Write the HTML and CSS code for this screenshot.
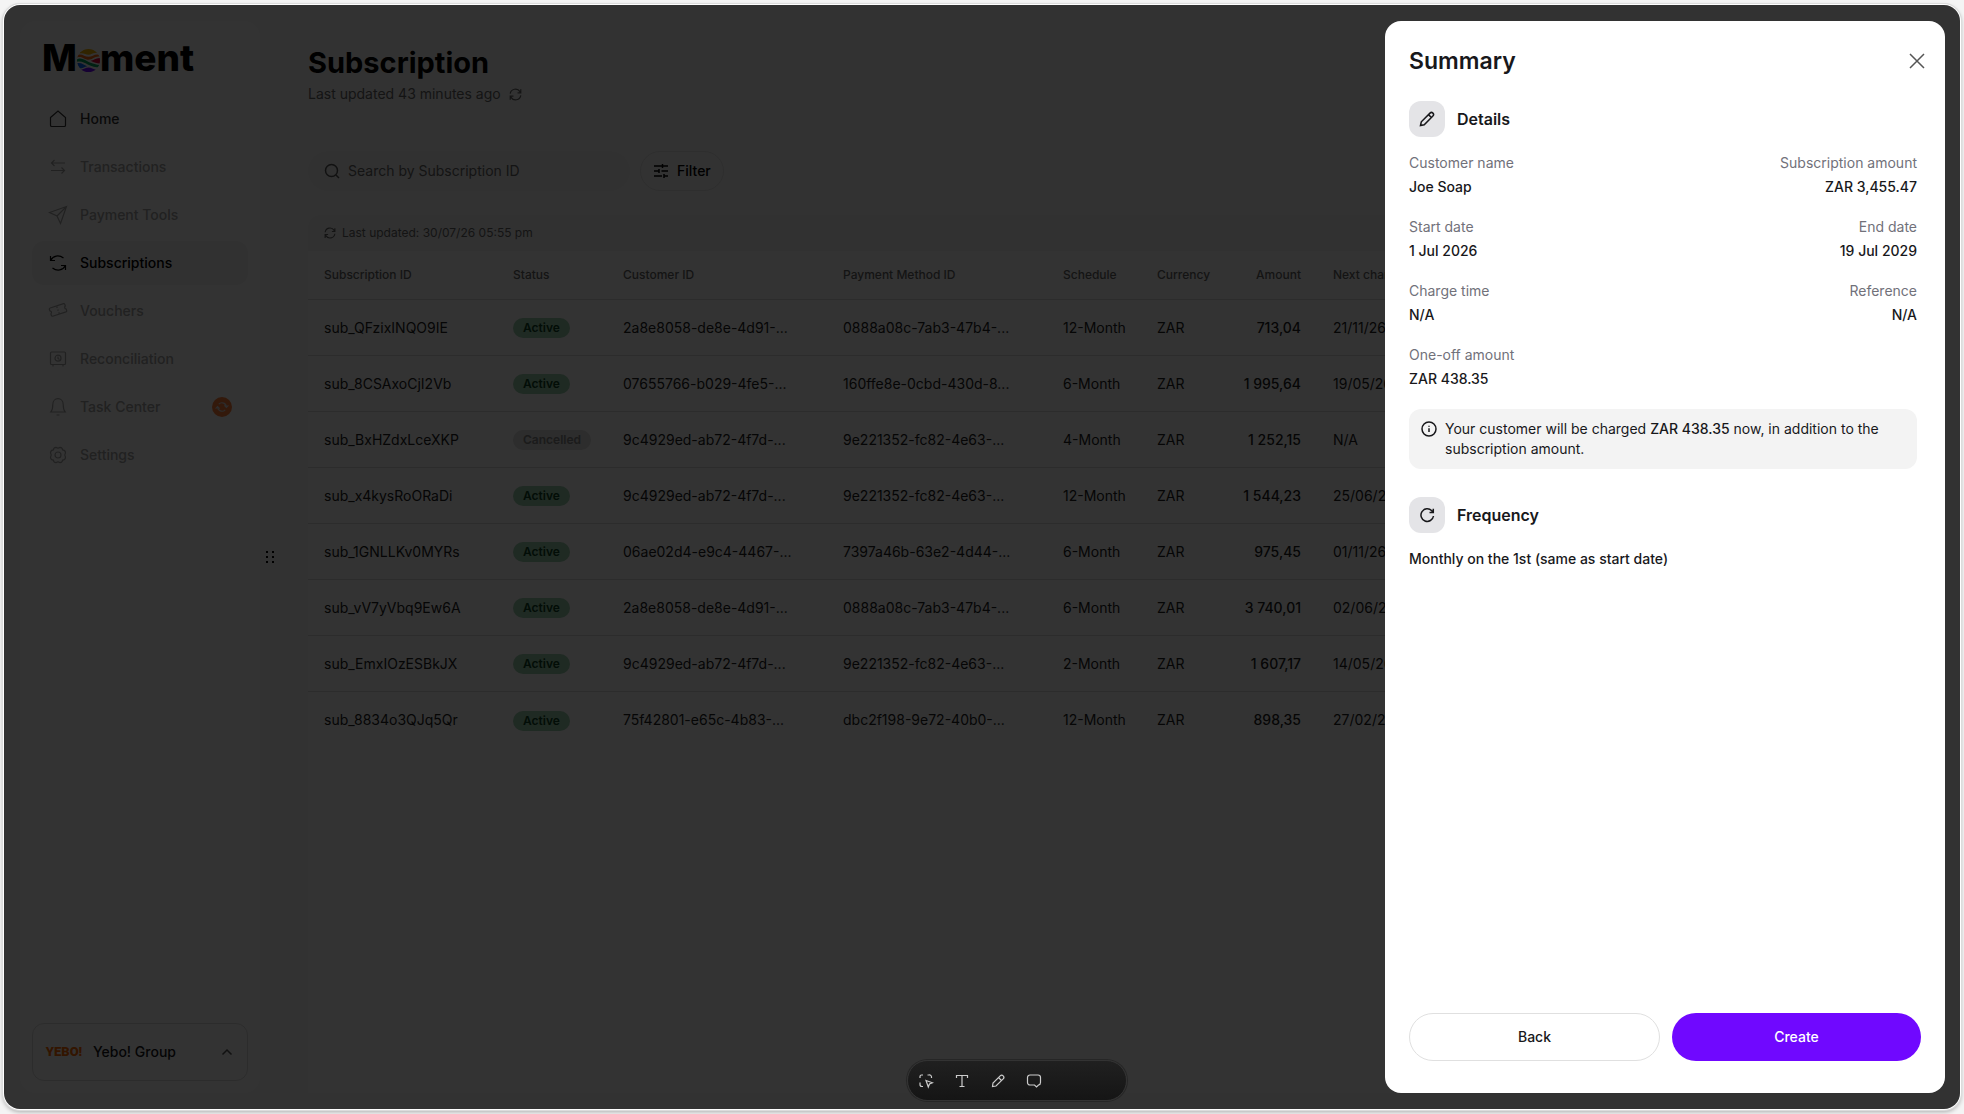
FILE: index.html
```html
<!DOCTYPE html>
<html lang="en">
    <head>
        <meta charset="utf-8">
        <meta name="viewport" content="width=device-width, initial-scale=1">
        <title>Moment - Subscription</title>
        <link rel="stylesheet" href="styles.css">
    </head>
    <body>
        <div class="frame">
            <div class="app">
                <aside class="sidebar">
                    <a href="#" class="logo" aria-label="Moment">
                        <span>M</span>
                        <svg width="23" height="23" viewBox="0 0 68 68">
                            <defs><clipPath id="orb"><circle cx="34" cy="34" r="34"/></clipPath></defs>
                            <g clip-path="url(#orb)">
                                <path d="M8 10Q20 -2 34 -2T60 10L54 12C46 12 42 17 34 17S20 11 8 13Z" fill="#f5b301"/>
                                <path d="M0 18C14 12 22 23 34 23S54 12 68 18V23C54 20 46 32 34 32S16 20 0 25Z" fill="#ff6a13"/>
                                <path d="M40 35C50 34 56 26 68 27V43C58 43 52 40 40 35Z" fill="#e4003a"/>
                                <path d="M0 30C14 24 24 34 36 39S56 46 68 47V55C54 54 44 52 32 46S14 35 0 38Z" fill="#00a35b"/>
                                <path d="M0 42C14 40 20 47 30 51C24 52 18 58 6 58Z" fill="#0a6bff"/>
                                <path d="M10 62C20 60 26 55 34 55S48 60 58 62L50 70H18Z" fill="#7008ff"/>
                            </g>
                        </svg>
                        <span>ment</span>
                    </a>
                    <nav class="menu">
                        <a href="#" class="home">
                            <svg class="icon" viewBox="0 0 20 20"><path d="M2.500 8.500L10 2L17.500 8.500V16.200a1.300 1.300 0 0 1-1.300 1.300H3.800a1.300 1.300 0 0 1-1.300-1.300Z"/></svg>
                            <span>Home</span>
                        </a>
                        <a href="#">
                            <svg class="icon" viewBox="0 0 20 20"><path d="M17 6H3.500M6.500 3L3.500 6L6.500 9M3 13.500H16.500M13.500 10.500L16.500 13.500L13.500 16.500"/></svg>
                            <span>Transactions</span>
                        </a>
                        <a href="#">
                            <svg class="icon" viewBox="0 0 20 20"><path d="M18.500 1.500L1.500 7.500L9 11L12.500 18.500ZM18.500 1.500L9 11"/></svg>
                            <span>Payment Tools</span>
                        </a>
                        <a href="#" class="active">
                            <svg class="icon" viewBox="0 0 20 20"><path d="M2.500 3V7.500H7M2.800 7.300C5 2.500 11 1.500 15.500 5M17.500 17V12.500H13M17.200 12.700C15 17.500 9 18.500 4.500 15"/></svg>
                            <span>Subscriptions</span>
                        </a>
                        <a href="#">
                            <svg class="icon" viewBox="0 0 20 20"><path d="M1.300 8.300Q1.200 7.300 2.200 7L15.500 2.700Q16.500 2.500 16.800 3.400L17.300 5A1.700 1.700 0 0 0 18.200 8L18.700 9.600Q18.900 10.500 18 10.900L4.700 15.200Q3.700 15.400 3.400 14.500L2.900 12.900A1.700 1.700 0 0 0 1.900 9.900Z"/><path d="M8.700 5.500L9.200 7M9.800 8.500L10.200 9.700M10.800 11.200L11.300 12.700"/></svg>
                            <span>Vouchers</span>
                        </a>
                        <a href="#">
                            <svg class="icon" viewBox="0 0 20 20"><rect x="2.500" y="3" width="15" height="12.500" rx="1"/><circle cx="10" cy="9.200" r="3"/><path d="M10 7.500V9.500L11.500 10.500M5 15.500V17.500M15 15.500V17.500"/></svg>
                            <span>Reconciliation</span>
                        </a>
                        <a href="#">
                            <svg class="icon" viewBox="0 0 20 20"><path d="M2.800 15C4.500 13 4.800 11 4.800 7.500C4.800 4 7 1.700 10 1.700S15.200 4 15.200 7.500C15.200 11 15.500 13 17.200 15ZM8.500 18H11.500"/></svg>
                            <span>Task Center</span>
                            <span class="sync">
                                <svg viewBox="0 0 20 20"><path d="M6 6.500A5.500 5.500 0 0 1 15.500 10.500M14 13.500A5.500 5.500 0 0 1 4.500 9.500M2 12L4.500 9.500L7 12M13 8L15.500 10.500L18 8"/></svg>
                            </span>
                        </a>
                        <a href="#">
                            <svg class="icon" viewBox="0 0 20 20"><path d="M8 2.300Q10 4 12 2.300Q14.500 2.500 14.600 4.900Q17.300 5.100 17.500 7.800Q16 10 17.500 12.200Q17.300 14.900 14.600 15.100Q14.500 17.500 12 17.700Q10 16 8 17.700Q5.500 17.500 5.400 15.100Q2.700 14.900 2.500 12.200Q4 10 2.500 7.800Q2.700 5.100 5.400 4.900Q5.500 2.500 8 2.300Z"/><circle cx="10" cy="10" r="3"/></svg>
                            <span>Settings</span>
                        </a>
                    </nav>
                    <button type="button" class="account">
                        <span class="yebo">YEBO!</span>
                        <span class="name">Yebo! Group</span>
                        <svg class="chevron" viewBox="0 0 12 12"><path d="M1.500 8.500L6 4L10.500 8.500"/></svg>
                    </button>
                </aside>

                <div class="handle">
                    <svg width="10" height="12" viewBox="0 0 10 12"><path d="M1 0h2v2h-2zM7 0h2v2h-2zM1 5h2v2h-2zM7 5h2v2h-2zM1 10h2v2h-2zM7 10h2v2h-2z"/></svg>
                </div>

                <main class="main">
                    <h1>Subscription</h1>
                    <div class="updated">
                        Last updated 43 minutes ago
                        <svg class="refresh" viewBox="0 0 16 16"><path d="M1.500 7A6.500 6.500 0 0 1 13.500 4.500L14.500 6M14.500 1.500V6H10.500M14.500 9A6.500 6.500 0 0 1 2.500 11.500L1.500 10M1.500 14.500V10H5.500"/></svg>
                    </div>
                    <div class="tools">
                        <div class="search">
                            <svg viewBox="0 0 16 16"><circle cx="7.500" cy="7.500" r="6"/><path d="M12 12L15 15"/></svg>
                            <input type="text" id="search" placeholder="Search by Subscription ID" aria-label="Search by Subscription ID">
                        </div>
                        <button type="button" class="filter">
                            <svg viewBox="0 0 16 16"><path d="M1 3H9.500M9.500 1V5M9.500 3H15M1 8H6M6 6V10M8.500 8H15M1 13H9M11 11V15M11 13H15"/></svg>
                            Filter
                        </button>
                    </div>
                    <div class="list">
                        <div class="strip">
                            <svg class="refresh" viewBox="0 0 16 16"><path d="M1.500 7A6.500 6.500 0 0 1 13.500 4.500L14.500 6M14.500 1.500V6H10.500M14.500 9A6.500 6.500 0 0 1 2.500 11.500L1.500 10M1.500 14.500V10H5.500"/></svg>
                            Last updated: 30/07/26 05:55 pm
                        </div>
                        <table>
                            <colgroup>
                                <col class="c-id"><col class="c-status"><col class="c-uuid"><col class="c-uuid">
                                <col class="c-schedule"><col class="c-currency"><col class="c-amount"><col>
                            </colgroup>
                            <thead>
                                <tr><th>Subscription ID</th><th>Status</th><th>Customer ID</th><th>Payment Method ID</th><th>Schedule</th><th>Currency</th><th class="amount">Amount</th><th>Next charge date</th></tr>
                            </thead>
                            <tbody>
                                <tr><td>sub_QFzixINQO9IE</td><td><span class="badge">Active</span></td><td>2a8e8058-de8e-4d91-...</td><td>0888a08c-7ab3-47b4-...</td><td>12-Month</td><td>ZAR</td><td class="amount">713,04</td><td>21/11/26</td></tr>
                                <tr><td>sub_8CSAxoCjI2Vb</td><td><span class="badge">Active</span></td><td>07655766-b029-4fe5-...</td><td>160ffe8e-0cbd-430d-8...</td><td>6-Month</td><td>ZAR</td><td class="amount">1 995,64</td><td>19/05/26</td></tr>
                                <tr><td>sub_BxHZdxLceXKP</td><td><span class="badge cancelled">Cancelled</span></td><td>9c4929ed-ab72-4f7d-...</td><td>9e221352-fc82-4e63-...</td><td>4-Month</td><td>ZAR</td><td class="amount">1 252,15</td><td>N/A</td></tr>
                                <tr><td>sub_x4kysRoORaDi</td><td><span class="badge">Active</span></td><td>9c4929ed-ab72-4f7d-...</td><td>9e221352-fc82-4e63-...</td><td>12-Month</td><td>ZAR</td><td class="amount">1 544,23</td><td>25/06/26</td></tr>
                                <tr><td>sub_1GNLLKv0MYRs</td><td><span class="badge">Active</span></td><td>06ae02d4-e9c4-4467-...</td><td>7397a46b-63e2-4d44-...</td><td>6-Month</td><td>ZAR</td><td class="amount">975,45</td><td>01/11/26</td></tr>
                                <tr><td>sub_vV7yVbq9Ew6A</td><td><span class="badge">Active</span></td><td>2a8e8058-de8e-4d91-...</td><td>0888a08c-7ab3-47b4-...</td><td>6-Month</td><td>ZAR</td><td class="amount">3 740,01</td><td>02/06/26</td></tr>
                                <tr><td>sub_EmxIOzESBkJX</td><td><span class="badge">Active</span></td><td>9c4929ed-ab72-4f7d-...</td><td>9e221352-fc82-4e63-...</td><td>2-Month</td><td>ZAR</td><td class="amount">1 607,17</td><td>14/05/26</td></tr>
                                <tr><td>sub_8834o3QJq5Qr</td><td><span class="badge">Active</span></td><td>75f42801-e65c-4b83-...</td><td>dbc2f198-9e72-40b0-...</td><td>12-Month</td><td>ZAR</td><td class="amount">898,35</td><td>27/02/27</td></tr>
                            </tbody>
                        </table>
                    </div>
                </main>
            </div>

            <div class="overlay"></div>

            <div class="dock">
                <button type="button" aria-label="Select">
                    <svg viewBox="0 0 16 16"><path d="M2 5V3.500A1.500 1.500 0 0 1 3.500 2H5M9.500 2H11A2 2 0 0 1 13.500 4V5M2 9.500V11.500A2 2 0 0 0 4 13.500H5M8 7.500L14.500 9.800L11.500 11L10.300 14Z"/></svg>
                </button>
                <button type="button" aria-label="Text">
                    <svg viewBox="0 0 16 16"><path d="M2.500 5V2.500H13.500V5M8 2.500V13.500M5.500 13.500H10.500"/></svg>
                </button>
                <button type="button" aria-label="Draw">
                    <svg viewBox="0 0 16 16"><path d="M2.500 13.500L3 10L10.200 2.800A1.900 1.900 0 0 1 13.200 5.800L6 13ZM8.500 4.500L11.500 7.500"/></svg>
                </button>
                <button type="button" aria-label="Comment">
                    <svg viewBox="0 0 16 16"><path d="M4 2H12A2.500 2.500 0 0 1 14.500 4.500V9.500A2.500 2.500 0 0 1 12.500 12L10.500 14L8.500 12H4A2.500 2.500 0 0 1 1.500 9.500V4.500A2.500 2.500 0 0 1 4 2Z"/></svg>
                </button>
            </div>

            <section class="drawer" role="dialog" aria-labelledby="summary">
                <div class="drawer-head">
                    <h2 id="summary">Summary</h2>
                    <button type="button" class="close" aria-label="Close">
                        <svg viewBox="0 0 24 24"><path d="M5 5L19 19M19 5L5 19"/></svg>
                    </button>
                </div>
                <div class="drawer-body">
                    <div class="title">
                        <span class="tile">
                            <svg viewBox="0 0 16 16"><path d="M1.500 14.500L2.300 10.800L11 2.100A1.800 1.800 0 0 1 13.900 5L5.200 13.700ZM9.500 3.600L12.400 6.500"/></svg>
                        </span>
                        <h3>Details</h3>
                    </div>
                    <dl class="details">
                        <div><dt>Customer name</dt><dd>Joe Soap</dd></div>
                        <div><dt>Subscription amount</dt><dd>ZAR 3,455.47</dd></div>
                        <div><dt>Start date</dt><dd>1 Jul 2026</dd></div>
                        <div><dt>End date</dt><dd>19 Jul 2029</dd></div>
                        <div><dt>Charge time</dt><dd>N/A</dd></div>
                        <div><dt>Reference</dt><dd>N/A</dd></div>
                        <div><dt>One-off amount</dt><dd>ZAR 438.35</dd></div>
                    </dl>
                    <div class="note">
                        <svg viewBox="0 0 16 16"><circle cx="8" cy="8" r="7"/><path d="M8 7.300V11M8 4.700V5.700"/></svg>
                        <p>Your customer will be charged <b>ZAR 438.35</b> now, in addition to the subscription amount.</p>
                    </div>
                    <div class="title">
                        <span class="tile">
                            <svg viewBox="0 0 16 16"><path d="M14.500 9A6.300 6.300 0 1 1 12.800 3.700L14.300 5.500M14.300 1.800V5.500H10.500"/></svg>
                        </span>
                        <h3>Frequency</h3>
                    </div>
                    <p class="frequency">Monthly on the 1st (same as start date)</p>
                </div>
                <div class="drawer-foot">
                    <button type="button" class="back">Back</button>
                    <button type="button" class="create">Create</button>
                </div>
            </section>
        </div>
    </body>
</html>
```
FILE: styles.css
```css
*{
    box-sizing: border-box;
}
body{
    margin: 0;
    height: 100vh;
    padding: 4px 3px;
    font-family: Inter, "Liberation Sans", sans-serif;
    font-size: 14px;
    line-height: 20px;
    color: #18181b;
    background: #f4f4f4;
    overflow: hidden;
}
h1, h2, h3, p, dl, dd{
    margin: 0;
}
a{
    color: inherit;
    text-decoration: none;
}
button, input{
    font: inherit;
    color: inherit;
    padding: 0;
    border: none;
    background: none;
}
button{
    cursor: pointer;
}
svg{
    flex: none;
    fill: none;
    stroke: currentColor;
    stroke-width: 1.5;
}
.frame{
    position: relative;
    height: 100%;
    border: 1px solid #fff;
    border-radius: 17px;
    box-shadow: 0 0 0 1px #dcdcdc, 0 2px 4px rgba(0,0,0,.3);
    background: #fafafa;
    overflow: hidden;
}
.app{
    display: flex;
    height: 100%;
    padding: 16px;
}

/* sidebar */
.sidebar{
    display: flex;
    flex-direction: column;
    width: 240px;
    padding: 12px;
    border-radius: 16px;
    background: #fff;
}
.logo{
    display: flex;
    align-items: center;
    height: 38px;
    margin: 6px 10px 20px;
    font-size: 37px;
    font-weight: 800;
    color: #000;
}
.logo svg{
    margin-top: 5px;
    stroke: none;
}
.menu{
    display: flex;
    flex-direction: column;
    gap: 4px;
    font-weight: 500;
    color: #a5a5a5;
}
.menu a{
    display: flex;
    align-items: center;
    gap: 12px;
    height: 44px;
    padding: 0 16px;
    border-radius: 12px;
}
.menu .home{
    color: #333;
}
.menu .active{
    color: #000;
    background: #f5f5f5;
}
.icon{
    width: 20px;
    height: 20px;
    stroke-width: 1.2;
}
.sync{
    display: flex;
    align-items: center;
    justify-content: center;
    width: 20px;
    height: 20px;
    margin-left: auto;
    border-radius: 50%;
    color: #ddd;
    background: #ff7d3b;
}
.sync svg{
    width: 16px;
    height: 16px;
}
.account{
    display: flex;
    align-items: center;
    height: 58px;
    margin-top: auto;
    padding: 0 12px;
    border: 1px solid #dcdcdc;
    border-radius: 12px;
    font-weight: 500;
}
.yebo{
    width: 38px;
    font-family: Roboto, "Liberation Sans", sans-serif;
    font-size: 13px;
    font-weight: 900;
    color: #ff6a00;
}
.name{
    margin-left: 10px;
}
.chevron{
    width: 12px;
    height: 12px;
    margin-left: auto;
    margin-right: 2px;
    color: #555;
}
.handle{
    display: flex;
    align-items: center;
    justify-content: center;
    width: 20px;
}
.handle svg{
    fill: #000;
    stroke: none;
}

/* subscription list */
.main{
    display: flex;
    flex-direction: column;
    flex: 1;
    min-width: 0;
    padding: 24px 12px 0 28px;
}
.main h1{
    font-size: 29px;
    line-height: 36px;
    font-weight: 700;
    color: #000;
}
.updated{
    display: flex;
    align-items: center;
    gap: 8px;
    margin: 3px 0 47px;
    color: #666;
}
.refresh{
    width: 13px;
    height: 13px;
}
.tools{
    display: flex;
    gap: 10px;
    margin-bottom: 24px;
}
.search{
    display: flex;
    align-items: center;
    gap: 8px;
    width: 322px;
    height: 40px;
    padding: 0 16px;
    border-radius: 20px;
    color: #555;
    background: #f5f5f5;
}
.search svg, .filter svg{
    width: 16px;
    height: 16px;
}
.search input{
    flex: 1;
    min-width: 0;
    outline: none;
}
.search input::placeholder{
    color: #666;
    opacity: 1;
}
.filter{
    display: flex;
    align-items: center;
    gap: 8px;
    height: 40px;
    padding: 0 12px;
    border: 1px solid #e4e4e4;
    border-radius: 20px;
    font-weight: 500;
    color: #000;
}
.list{
    flex: 1;
    border-radius: 12px 12px 0 0;
    background: #fff;
    overflow: hidden;
}
.strip{
    display: flex;
    align-items: center;
    gap: 6px;
    height: 36px;
    padding: 0 16px;
    font-size: 12px;
    color: #666;
    background: #f5f5f5;
}
.strip .refresh{
    width: 12px;
    height: 12px;
}
table{
    width: 100%;
    table-layout: fixed;
    border-collapse: separate;
    border-spacing: 0;
}
.c-id{ width: 189px; }
.c-status{ width: 110px; }
.c-uuid{ width: 220px; }
.c-schedule{ width: 94px; }
.c-currency{ width: 84px; }
.c-amount{ width: 92px; }
th, td{
    padding: 0 16px;
    text-align: left;
    white-space: nowrap;
    border-bottom: 1px solid #dcdcdc;
}
th{
    height: 49px;
    font-size: 12px;
    font-weight: 500;
    color: #666;
}
td{
    height: 56px;
    color: #222;
}
tbody tr:last-child td{
    border-bottom: none;
}
.amount{
    text-align: right;
}
td.amount{
    font-weight: 500;
}
.badge{
    display: inline-block;
    padding: 0 10px;
    border-radius: 10px;
    font-size: 12px;
    font-weight: 600;
    color: #0b4424;
    background: #9ccfae;
}
.badge.cancelled{
    color: #888;
    background: #dedede;
}

.overlay{
    position: absolute;
    inset: 0;
    background: rgba(0,0,0,.8);
}

/* floating toolbar */
.dock{
    position: absolute;
    left: calc(50% + 35px);
    bottom: 8px;
    display: flex;
    align-items: center;
    gap: 20px;
    width: 220px;
    height: 41px;
    padding: 0 10px;
    border: 1px solid #333;
    border-radius: 21px;
    background: linear-gradient(#202020, #151515);
    box-shadow: 0 0 0 1px #262626;
    color: #ccc;
    transform: translateX(-50%);
}
.dock button{
    display: flex;
}
.dock svg{
    width: 16px;
    height: 16px;
    stroke-width: 1.2;
}

/* summary drawer */
.drawer{
    position: absolute;
    top: 16px;
    right: 15px;
    bottom: 16px;
    display: flex;
    flex-direction: column;
    width: 560px;
    border-radius: 16px;
    background: #fff;
}
.drawer-head{
    display: flex;
    align-items: center;
    justify-content: space-between;
    padding: 24px 16px 24px 24px;
}
.drawer-head h2{
    font-size: 23px;
    line-height: 32px;
    font-weight: 600;
}
.close{
    display: flex;
    color: #555;
}
.close svg{
    width: 24px;
    height: 24px;
}
.drawer-body{
    flex: 1;
    padding: 0 28px 0 24px;
    overflow: auto;
}
.title{
    display: flex;
    align-items: center;
    gap: 12px;
    margin-bottom: 16px;
}
.title h3{
    font-size: 16px;
    font-weight: 600;
}
.tile{
    display: flex;
    align-items: center;
    justify-content: center;
    width: 36px;
    height: 36px;
    border-radius: 12px;
    background: #e4e4e7;
}
.tile svg{
    width: 16px;
    height: 16px;
}
.details{
    display: grid;
    grid-template-columns: 1fr 1fr;
    gap: 20px;
}
.details div:nth-child(even){
    text-align: right;
}
.details dt{
    margin-bottom: 4px;
    color: #71717a;
}
.details dd{
    font-weight: 500;
}
.note{
    display: flex;
    gap: 8px;
    margin: 20px 0 28px;
    padding: 10px 12px;
    border-radius: 12px;
    background: #f3f3f3;
}
.note svg{
    width: 16px;
    height: 16px;
    margin-top: 2px;
}
.note b, .frequency{
    font-weight: 500;
}
.drawer-foot{
    display: flex;
    gap: 12px;
    padding: 32px 24px;
}
.drawer-foot button{
    flex: 1;
    height: 48px;
    border-radius: 24px;
    font-weight: 500;
}
.drawer-foot .back{
    border: 1px solid #e0e0e0;
}
.drawer-foot .create{
    color: #fff;
    background: #7008ff;
}
```
